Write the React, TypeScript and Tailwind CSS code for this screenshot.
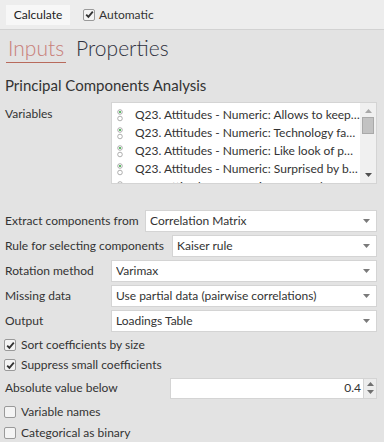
import React from "react";

const font = { fontFamily: 'Lato, "Open Sans", sans-serif' };

function Check({ checked }: { checked?: boolean }) {
  return (
    <span className="w-[12px] h-[12px] shrink-0 rounded-[2px] border border-[#9a9a9a] bg-[#f4f4f4] flex items-center justify-center">
      {checked && (
        <svg width="9" height="9" viewBox="0 0 9 9">
          <path d="M1.2 4.6 L3.4 6.9 L7.8 1.6" fill="none" stroke="#333" strokeWidth="1.8" />
        </svg>
      )}
    </span>
  );
}

function Radios() {
  return (
    <svg width="6" height="13" viewBox="0 0 6 13" className="shrink-0">
      <circle cx="3" cy="3" r="2.3" fill="#fff" stroke="#9a9a9a" strokeWidth="0.8" />
      <circle cx="3" cy="3" r="1.1" fill="#3aa845" />
      <circle cx="3" cy="9.5" r="2.3" fill="#fff" stroke="#9a9a9a" strokeWidth="0.8" />
    </svg>
  );
}

function Select({ value }: { value: string }) {
  return (
    <div className="flex-1 min-w-0 h-[22px] bg-white border border-[#d4d4d4] flex items-center pl-[4px] pr-[6px] text-[#333]">
      <span className="flex-1 truncate">{value}</span>
      <svg width="7" height="4" viewBox="0 0 7 4">
        <path d="M0 0 H7 L3.5 4 Z" fill="#7a7a7a" />
      </svg>
    </div>
  );
}

const vars = [
  "Q23. Attitudes - Numeric: Allows to keep…",
  "Q23. Attitudes - Numeric: Technology fa…",
  "Q23. Attitudes - Numeric: Like look of p…",
  "Q23. Attitudes - Numeric: Surprised by b…",
  "Q23. Attitudes - Numeric: Stay on th…",
];

export default function App() {
  return (
    <div style={font} className="w-[384px] h-[442px] overflow-hidden bg-[#e3e3e3] text-[12px] leading-[16px] text-[#333] whitespace-nowrap">
      {/* toolbar */}
      <div className="h-[30px] bg-[#ededed] border-b border-[#d2d2d2] flex items-center pl-[6px]">
        <div className="h-[20px] w-[64px] bg-[#f7f7f7] flex items-center justify-center text-[#222]">Calculate</div>
        <label className="ml-[13px] flex items-center gap-[4px] text-[#333]">
          <Check checked />
          Automatic
        </label>
      </div>

      {/* tabs */}
      <div className="h-[33px] flex items-end pl-[6px] gap-[10px] text-[21px] font-light">
        <div className="border-b border-[#b86a5c] text-[#c8807a] px-[2px] leading-[28px]">Inputs</div>
        <div className="text-[#2f3140] leading-[28px] pb-[1px]">Properties</div>
      </div>

      <div className="px-[5px] pt-[12px] text-[15px] text-[#333] leading-[20px]">Principal Components Analysis</div>

      <div className="flex pl-[5px] pr-[7px] mt-[7px]">
        <div className="w-[106px] pt-[4px]">Variables</div>
        <div className="flex-1 h-[82px] bg-white border border-[#d4d4d4] flex overflow-hidden">
          <div className="flex-1 min-w-0 flex flex-col pl-[5px] pt-[3px] overflow-hidden">
            {vars.map((v) => (
              <div key={v} className="h-[18px] shrink-0 flex items-center gap-[12px] text-[#333]">
                <Radios />
                <span>{v}</span>
              </div>
            ))}
          </div>
          <div className="w-[16px] bg-[#f0f0f0] flex flex-col items-center">
            <svg width="7" height="4" viewBox="0 0 7 4" className="mt-[6px]">
              <path d="M0 4 H7 L3.5 0 Z" fill="#a8a8a8" />
            </svg>
            <div className="mt-[4px] w-[12px] h-[17px] bg-[#c2c2c2] border border-[#a9a9a9]" />
            <div className="flex-1" />
            <svg width="7" height="4" viewBox="0 0 7 4" className="mb-[6px]">
              <path d="M0 0 H7 L3.5 4 Z" fill="#505050" />
            </svg>
          </div>
        </div>
      </div>

      <div className="flex flex-col gap-[3px] pl-[5px] pr-[7px] mt-[26px]">
        <div className="flex items-center">
          <div className="w-[140px]">Extract components from</div>
          <Select value="Correlation Matrix" />
        </div>
        <div className="flex items-center">
          <div className="w-[167px]">Rule for selecting components</div>
          <Select value="Kaiser rule" />
        </div>
        <div className="flex items-center">
          <div className="w-[106px]">Rotation method</div>
          <Select value="Varimax" />
        </div>
        <div className="flex items-center">
          <div className="w-[106px]">Missing data</div>
          <Select value="Use partial data (pairwise correlations)" />
        </div>
        <div className="flex items-center">
          <div className="w-[106px]">Output</div>
          <Select value="Loadings Table" />
        </div>
      </div>

      <div className="flex flex-col pl-[4px] pr-[7px] mt-[3px]">
        <label className="h-[20px] flex items-center gap-[5px]">
          <Check checked />
          Sort coefficients by size
        </label>
        <label className="h-[20px] flex items-center gap-[5px]">
          <Check checked />
          Suppress small coefficients
        </label>
        <div className="h-[26px] flex items-center pl-[1px]">
          <div className="w-[165px]">Absolute value below</div>
          <div className="flex-1 h-[21px] bg-white border border-[#d4d4d4] flex items-center justify-end pr-[2px] text-[#333]">0.4</div>
          <div className="w-[13px] h-[21px] bg-[#ececec] border border-l-0 border-[#d4d4d4] flex flex-col items-center justify-center gap-[4px]">
            <svg width="7" height="4" viewBox="0 0 7 4">
              <path d="M0 4 H7 L3.5 0 Z" fill="#707070" />
            </svg>
            <svg width="7" height="4" viewBox="0 0 7 4">
              <path d="M0 0 H7 L3.5 4 Z" fill="#707070" />
            </svg>
          </div>
        </div>
        <label className="h-[21px] flex items-center gap-[5px]">
          <Check />
          Variable names
        </label>
        <label className="h-[21px] flex items-center gap-[5px]">
          <Check />
          Categorical as binary
        </label>
      </div>
    </div>
  );
}
